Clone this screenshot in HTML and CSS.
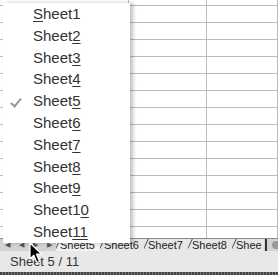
FILE: index.html
```html
<!DOCTYPE html>
<html lang="en">
<head>
    <meta charset="UTF-8">
    <title>Sheet list</title>
    <link rel="stylesheet" href="styles.css">
</head>
<body>
    <div class="window">
        <div class="sheet">
            <table class="grid">
                <tr><td></td><td></td><td></td></tr>
                <tr><td></td><td></td><td></td></tr>
                <tr><td></td><td></td><td></td></tr>
                <tr><td></td><td></td><td></td></tr>
                <tr><td></td><td></td><td></td></tr>
                <tr><td></td><td></td><td></td></tr>
                <tr><td></td><td></td><td></td></tr>
                <tr><td></td><td></td><td></td></tr>
                <tr><td></td><td></td><td></td></tr>
                <tr><td></td><td></td><td></td></tr>
                <tr><td></td><td></td><td></td></tr>
                <tr><td></td><td></td><td></td></tr>
                <tr><td></td><td></td><td></td></tr>
                <tr><td></td><td></td><td></td></tr>
                <tr><td></td><td></td><td></td></tr>
            </table>
        </div>
        <div class="tabbar">
            <div class="nav">
                <span>&#9664;</span><span>&#9664;</span><span>&#9654;</span><span>&#9654;</span>
            </div>
            <div class="tab active">Sheet5</div>
            <div class="tab">Sheet6</div>
            <div class="tab">Sheet7</div>
            <div class="tab">Sheet8</div>
            <div class="tab cut">Shee</div>
            <div class="splitter"></div>
            <div class="scroll"></div>
        </div>
        <div class="status">Sheet 5 / 11</div>
        <div class="edge"></div>

        <!-- popup list of sheets -->
        <ul class="menu">
            <li><u>S</u>heet1</li>
            <li>Sheet<u>2</u></li>
            <li>Sheet<u>3</u></li>
            <li>Sheet<u>4</u></li>
            <li class="checked">Sheet<u>5</u></li>
            <li>Sheet<u>6</u></li>
            <li>Sheet<u>7</u></li>
            <li>Sheet<u>8</u></li>
            <li>Sheet<u>9</u></li>
            <li>Sheet1<u>0</u></li>
            <li>Sheet<u>11</u></li>
        </ul>

        <svg class="cursor" width="15" height="22" viewBox="0 0 15 22">
            <path d="M1 1 L1 17 L4.8 13.2 L7.8 20.5 L10.5 19.4 L7.5 12.2 L12.8 12.2 Z" fill="#000" stroke="#fff" stroke-width="1.2" stroke-linejoin="round"/>
        </svg>
    </div>
</body>
</html>
```

FILE: styles.css
```css
body {
    margin: 0;
    font-family: 'Liberation Sans', Arial, sans-serif;
    background-color: #fff;
}
.window {
    position: relative;
    width: 278px;
    height: 275px;
    overflow: hidden;
    display: flex;
    flex-direction: column;
}
.sheet {
    height: 238px;
    overflow: hidden;
    background: white;
}
.grid {
    border-collapse: collapse;
    margin-top: -11px;
    width: 100%;
    table-layout: fixed;
}
.grid td {
    height: 16px;
    padding: 0;
    border-bottom: 1px solid #bcbcbc;
    border-right: 1px solid #bcbcbc;
}
.grid td:nth-child(1) {
    width: 128px;
}
.grid td:nth-child(2) {
    width: 77px;
}

/* tab strip */
.tabbar {
    height: 12px;
    display: flex;
    align-items: stretch;
    background-color: #d2d2d2;
    border-top: 1px solid #8a8a8a;
    font-size: 11px;
    line-height: 12px;
    color: #222;
}
.nav {
    width: 56px;
    display: flex;
    justify-content: space-around;
    font-size: 7px;
    color: #555;
}
.tab {
    position: relative;
    width: 40px;
    padding-left: 4px;
    background-color: #e6e6e6;
    white-space: nowrap;
    overflow: hidden;
}
.tab::before {
    content: "";
    position: absolute;
    left: 1px;
    top: 0;
    bottom: 0;
    border-left: 1px solid #444;
    transform: skewX(-25deg);
}
.tab.active {
    background-color: #f2f2f2;
}
.tab.cut {
    width: 28px;
}
.splitter {
    width: 2px;
    margin: 0 1px;
    background-color: #333;
}
.scroll {
    flex: 1;
    margin: 2px 0 2px 4px;
    border-radius: 5px 0 0 5px;
    background-color: #9a9a9a;
}

.status {
    height: 21px;
    padding-left: 10px;
    background-color: #e8e8e8;
    font-size: 13px;
    line-height: 22px;
    color: #333;
}
.edge {
    height: 3px;
    background: repeating-linear-gradient(90deg, #444 0 2px, #777 2px 3px);
}

/* popup */
.menu {
    position: absolute;
    left: 3px;
    top: 3px;
    width: 127px;
    margin: 0;
    padding: 0;
    list-style: none;
    background: white;
    box-shadow: 3px 0 4px rgba(0,0,0,0.25);
}
.menu li {
    position: relative;
    height: 21.8px;
    line-height: 21.8px;
    padding-left: 30px;
    font-size: 15px;
    color: #333;
}
.menu u {
    text-decoration-thickness: 1px;
    text-underline-offset: 2px;
}
.menu li.checked::before {
    content: "";
    position: absolute;
    left: 10px;
    top: 6px;
    width: 4px;
    height: 9px;
    border-right: 2px solid #9a9a9a;
    border-bottom: 2px solid #9a9a9a;
    transform: rotate(40deg);
}
.cursor {
    position: absolute;
    left: 29px;
    top: 242px;
}
```
